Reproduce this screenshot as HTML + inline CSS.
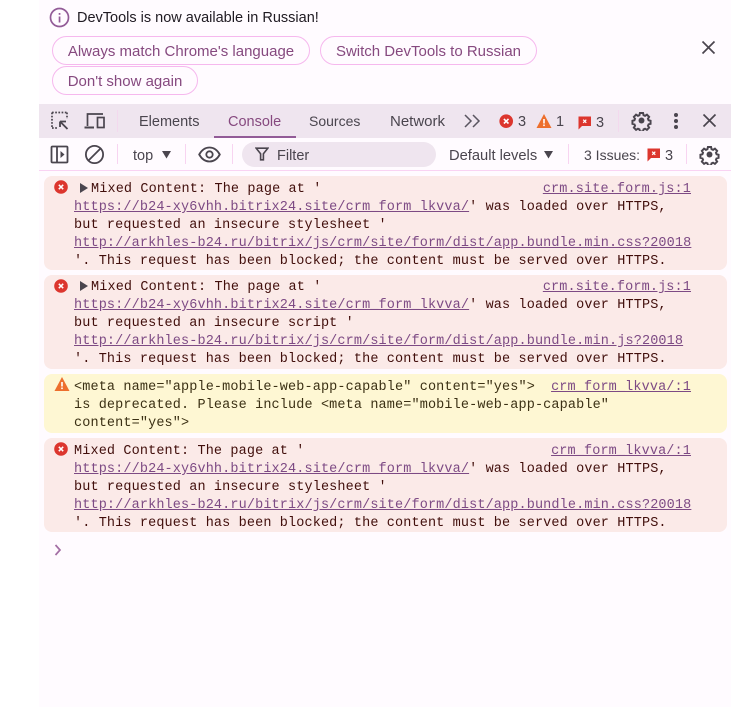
<!DOCTYPE html>
<html><head><meta charset="utf-8"><style>
html,body{margin:0;padding:0;background:#fff;}
#r{position:relative;width:731px;height:707px;overflow:hidden;background:#fff;font-family:"Liberation Sans",sans-serif;}
#r div,#r svg,#r span.a{position:absolute;}
.ui{white-space:nowrap;font-size:14.5px;line-height:18px;color:#4a454e;}
.btn{border:1px solid #f6b8ee;border-radius:15px;height:29px;box-sizing:border-box;line-height:29px;font-size:15px;color:#86497f;text-align:center;white-space:nowrap;}
.msg{left:44px;width:683px;border-radius:8px;background:#fbeae8;}
.l{left:74px;font:13.5px/18px "Liberation Mono",monospace;letter-spacing:.13px;color:#410e0b;white-space:pre;}
.l a,.s a{color:#7d4a84;text-decoration:underline;}
.s{font:13.5px/18px "Liberation Mono",monospace;letter-spacing:.13px;white-space:pre;text-align:right;right:40px;}
.w{color:#3b3014;}
.sep{width:1px;background:#f8d4f1;}
</style></head><body><div id="r">
<div style="left:39px;top:0;width:692px;height:707px;background:#fffbff"></div>

<svg style="left:49px;top:7px" width="22" height="22" viewBox="0 0 22 22"><circle cx="10.5" cy="10.5" r="9" fill="none" stroke="#925b97" stroke-width="1.7"/><rect x="9.7" y="9.5" width="1.7" height="6" fill="#925b97"/><rect x="9.7" y="6" width="1.7" height="1.8" fill="#925b97"/></svg>
<div class="ui" style="left:77px;top:9px;color:#1f1a22;font-size:14.5px">DevTools is now available in Russian!</div>
<div class="btn" style="left:52px;top:36px;width:258px">Always match Chrome's language</div>
<div class="btn" style="left:320px;top:36px;width:217px">Switch DevTools to Russian</div>
<div class="btn" style="left:52px;top:66px;width:146px">Don't show again</div>
<svg style="left:701px;top:40px" width="15" height="15" viewBox="0 0 15 15"><path d="M1.5 1.5L13.5 13.5M13.5 1.5L1.5 13.5" stroke="#4a454e" stroke-width="1.7" fill="none"/></svg>

<div style="left:39px;top:104px;width:692px;height:34px;background:#efe5ef"></div>
<svg style="left:50px;top:111px" width="20" height="20" viewBox="0 0 20 20" fill="none" stroke="#4a454e"><path d="M2 1.5H17M2 1.5V17M2 17H8M17 1.5V8" stroke-width="1.7" stroke-dasharray="1.7 1.5"/><path d="M17.5 18L10 10.5M10 10.5V16M10 10.5H16" stroke-width="1.8"/></svg>
<svg style="left:84px;top:112px" width="22" height="18" viewBox="0 0 22 18" fill="none" stroke="#4a454e" stroke-width="1.7"><path d="M3.5 14V2H19"/><path d="M0.5 15.5H10" stroke-width="2"/><rect x="13.5" y="5.5" width="6.5" height="10"/></svg>
<div class="sep" style="left:117px;top:110px;height:22px;background:#f3d9ee"></div>
<div class="ui" style="left:139px;top:113px">Elements</div>
<div class="ui" style="left:228px;top:113px;color:#86497f">Console</div>
<div style="left:214px;top:136px;width:82px;height:2px;background:#925b97"></div>
<div class="ui" style="left:309px;top:112px;font-size:14px">Sources</div>
<div class="ui" style="left:390px;top:113px;font-size:15px">Network</div>
<svg style="left:464px;top:114px" width="17" height="14" viewBox="0 0 17 14" fill="none" stroke="#5a5560" stroke-width="1.5"><path d="M1 1L7 7L1 13M9 1L15 7L9 13"/></svg>
<svg style="left:499px;top:114px" width="15" height="15" viewBox="0 0 15 15"><circle cx="7.2" cy="7.2" r="6.8" fill="#dc362e"/><path d="M4.9 4.9L9.5 9.5M9.5 4.9L4.9 9.5" stroke="#fff" stroke-width="1.6"/></svg>
<div class="ui" style="left:518px;top:113px">3</div>
<svg style="left:536px;top:114px" width="16" height="14" viewBox="0 0 16 14"><path d="M8 0L15.5 14H0.5Z" fill="#ed6f2d"/><rect x="7.2" y="5" width="1.6" height="4.5" fill="#fff"/><rect x="7.2" y="10.5" width="1.6" height="1.6" fill="#fff"/></svg>
<div class="ui" style="left:556px;top:113px">1</div>
<svg style="left:578px;top:116px" width="14" height="14" viewBox="0 0 14 14"><path d="M0.5 0.5H13V10H4L0.5 13.5Z" fill="#dc362e"/><path d="M5.2 3.7L8.3 6.8M8.3 3.7L5.2 6.8" stroke="#fff" stroke-width="1.2"/></svg>
<div class="ui" style="left:596px;top:114px">3</div>
<div class="sep" style="left:618px;top:110px;height:22px;background:#f3d9ee"></div>
<svg style="left:631px;top:110px" width="21" height="21" viewBox="0 0 24 24" fill="none" stroke="#4a454e" stroke-width="2.5"><path d="M10 2.5h4l.6 2.8 1.9.8 2.4-1.5 2.8 2.8-1.5 2.4.8 1.9 2.5.6v3.9l-2.5.6-.8 1.9 1.5 2.4-2.8 2.8-2.4-1.5-1.9.8-.6 2.8h-4l-.6-2.8-1.9-.8-2.4 1.5-2.8-2.8 1.5-2.4-.8-1.9-2.5-.6v-3.9l2.5-.6.8-1.9-1.5-2.4 2.8-2.8 2.4 1.5 1.9-.8z" transform="translate(1.2 1.2) scale(.9)"/><circle cx="12" cy="12" r="3.4" fill="#4a454e" stroke="none"/></svg>
<svg style="left:673px;top:112px" width="6" height="18" viewBox="0 0 6 18" fill="#4a454e"><circle cx="3" cy="3" r="2"/><circle cx="3" cy="9" r="2"/><circle cx="3" cy="15" r="2"/></svg>
<svg style="left:702px;top:113px" width="15" height="15" viewBox="0 0 15 15"><path d="M1.5 1.5L13.5 13.5M13.5 1.5L1.5 13.5" stroke="#4a454e" stroke-width="1.7" fill="none"/></svg>

<svg style="left:50px;top:145px" width="19" height="19" viewBox="0 0 19 19" fill="none" stroke="#4a454e" stroke-width="1.8"><rect x="1.5" y="1.5" width="16" height="16" rx="1"/><path d="M7 1.5V17.5"/><path d="M10.5 6L14.5 9.5L10.5 13Z" fill="#4a454e" stroke="none"/></svg>
<svg style="left:84px;top:144px" width="21" height="21" viewBox="0 0 21 21" fill="none" stroke="#4a454e" stroke-width="1.8"><circle cx="10.5" cy="10.5" r="8.6"/><path d="M4.5 16.5L16.5 4.5"/></svg>
<div class="sep" style="left:117px;top:144px;height:20px"></div>
<div class="ui" style="left:133px;top:147px">top</div>
<svg style="left:161px;top:151px" width="11" height="8" viewBox="0 0 11 8"><path d="M1 0H10L5.5 7.5Z" fill="#4a454e"/></svg>
<div class="sep" style="left:185px;top:144px;height:20px"></div>
<svg style="left:198px;top:146px" width="23" height="17" viewBox="0 0 23 17" fill="none" stroke="#4a454e" stroke-width="1.8"><path d="M1.2 8.5C4 3.5 7.5 1.5 11.5 1.5S19 3.5 21.8 8.5C19 13.5 15.5 15.5 11.5 15.5S4 13.5 1.2 8.5Z"/><circle cx="11.5" cy="8.5" r="3.2"/></svg>
<div class="sep" style="left:232px;top:144px;height:20px"></div>
<div style="left:242px;top:142px;width:194px;height:25px;border-radius:13px;background:#efe5ef"></div>
<svg style="left:255px;top:147px" width="14" height="14" viewBox="0 0 14 14" fill="none" stroke="#4a454e" stroke-width="1.6"><path d="M1.2 1.2H12.8L8.4 6.8V12.8H5.6V6.8Z"/></svg>
<div class="ui" style="left:277px;top:147px">Filter</div>
<div class="ui" style="left:449px;top:147px;font-size:14.7px">Default levels</div>
<svg style="left:543px;top:151px" width="11" height="8" viewBox="0 0 11 8"><path d="M1 0H10L5.5 7.5Z" fill="#4a454e"/></svg>
<div class="sep" style="left:568px;top:144px;height:20px"></div>
<div class="ui" style="left:584px;top:146px;font-size:14px">3 Issues:</div>
<svg style="left:647px;top:148px" width="14" height="14" viewBox="0 0 14 14"><path d="M0.5 0.5H13V10H4L0.5 13.5Z" fill="#dc362e"/><path d="M5.2 3.7L8.3 6.8M8.3 3.7L5.2 6.8" stroke="#fff" stroke-width="1.2"/></svg>
<div class="ui" style="left:665px;top:147px">3</div>
<div class="sep" style="left:686px;top:144px;height:20px"></div>
<svg style="left:699px;top:144px" width="21" height="21" viewBox="0 0 24 24" fill="none" stroke="#4a454e" stroke-width="2.5"><path d="M10 2.5h4l.6 2.8 1.9.8 2.4-1.5 2.8 2.8-1.5 2.4.8 1.9 2.5.6v3.9l-2.5.6-.8 1.9 1.5 2.4-2.8 2.8-2.4-1.5-1.9.8-.6 2.8h-4l-.6-2.8-1.9-.8-2.4 1.5-2.8-2.8 1.5-2.4-.8-1.9-2.5-.6v-3.9l2.5-.6.8-1.9-1.5-2.4 2.8-2.8 2.4 1.5 1.9-.8z" transform="translate(1.2 1.2) scale(.9)"/><circle cx="12" cy="12" r="3.4" fill="#4a454e" stroke="none"/></svg>
<div style="left:39px;top:170px;width:692px;height:1px;background:#f9d3f3"></div>

<div class="msg" style="top:176px;height:94px"></div>
<div class="msg" style="top:275px;height:94px"></div>
<div class="msg" style="top:374px;height:59px;background:#fef7d3"></div>
<div class="msg" style="top:438px;height:94px"></div>

<svg style="left:54px;top:180px" width="15" height="14" viewBox="0 0 15 14"><circle cx="7" cy="7" r="6.8" fill="#dc362e"/><path d="M4.8 4.8L9.2 9.2M9.2 4.8L4.8 9.2" stroke="#fff" stroke-width="1.5"/></svg>
<svg style="left:80px;top:183px" width="9" height="10" viewBox="0 0 9 10"><path d="M0 0L8 5L0 10Z" fill="#4a454e"/></svg>
<div class="l" style="left:91px;top:181px">Mixed Content: The page at '</div>
<div class="s" style="top:181px"><a>crm.site.form.js:1</a></div>
<div class="l" style="top:199px"><a>https://b24-xy6vhh.bitrix24.site/crm_form_lkvva/</a>' was loaded over HTTPS,</div>
<div class="l" style="top:217px">but requested an insecure stylesheet '</div>
<div class="l" style="top:235px"><a>http://arkhles-b24.ru/bitrix/js/crm/site/form/dist/app.bundle.min.css?20018</a></div>
<div class="l" style="top:253px">'. This request has been blocked; the content must be served over HTTPS.</div>

<svg style="left:54px;top:279px" width="15" height="14" viewBox="0 0 15 14"><circle cx="7" cy="7" r="6.8" fill="#dc362e"/><path d="M4.8 4.8L9.2 9.2M9.2 4.8L4.8 9.2" stroke="#fff" stroke-width="1.5"/></svg>
<svg style="left:80px;top:281px" width="9" height="10" viewBox="0 0 9 10"><path d="M0 0L8 5L0 10Z" fill="#4a454e"/></svg>
<div class="l" style="left:91px;top:279px">Mixed Content: The page at '</div>
<div class="s" style="top:279px"><a>crm.site.form.js:1</a></div>
<div class="l" style="top:297px"><a>https://b24-xy6vhh.bitrix24.site/crm_form_lkvva/</a>' was loaded over HTTPS,</div>
<div class="l" style="top:315px">but requested an insecure script '</div>
<div class="l" style="top:333px"><a>http://arkhles-b24.ru/bitrix/js/crm/site/form/dist/app.bundle.min.js?20018</a></div>
<div class="l" style="top:351px">'. This request has been blocked; the content must be served over HTTPS.</div>

<svg style="left:54px;top:377px" width="16" height="14" viewBox="0 0 16 14"><path d="M8 0L15.5 14H0.5Z" fill="#ed6f2d"/><rect x="7.2" y="5" width="1.6" height="4.5" fill="#fff"/><rect x="7.2" y="10.5" width="1.6" height="1.6" fill="#fff"/></svg>
<div class="l w" style="top:379px">&lt;meta name="apple-mobile-web-app-capable" content="yes"&gt;</div>
<div class="s" style="top:379px"><a>crm_form_lkvva/:1</a></div>
<div class="l w" style="top:397px">is deprecated. Please include &lt;meta name="mobile-web-app-capable"</div>
<div class="l w" style="top:415px">content="yes"&gt;</div>

<svg style="left:54px;top:442px" width="15" height="14" viewBox="0 0 15 14"><circle cx="7" cy="7" r="6.8" fill="#dc362e"/><path d="M4.8 4.8L9.2 9.2M9.2 4.8L4.8 9.2" stroke="#fff" stroke-width="1.5"/></svg>
<div class="l" style="top:443px">Mixed Content: The page at '</div>
<div class="s" style="top:443px"><a>crm_form_lkvva/:1</a></div>
<div class="l" style="top:461px"><a>https://b24-xy6vhh.bitrix24.site/crm_form_lkvva/</a>' was loaded over HTTPS,</div>
<div class="l" style="top:479px">but requested an insecure stylesheet '</div>
<div class="l" style="top:497px"><a>http://arkhles-b24.ru/bitrix/js/crm/site/form/dist/app.bundle.min.css?20018</a></div>
<div class="l" style="top:515px">'. This request has been blocked; the content must be served over HTTPS.</div>

<svg style="left:54px;top:544px" width="8" height="12" viewBox="0 0 8 12" fill="none" stroke="#a36ea4" stroke-width="1.7"><path d="M1.5 1L6 6L1.5 11"/></svg>
</div></body></html>
